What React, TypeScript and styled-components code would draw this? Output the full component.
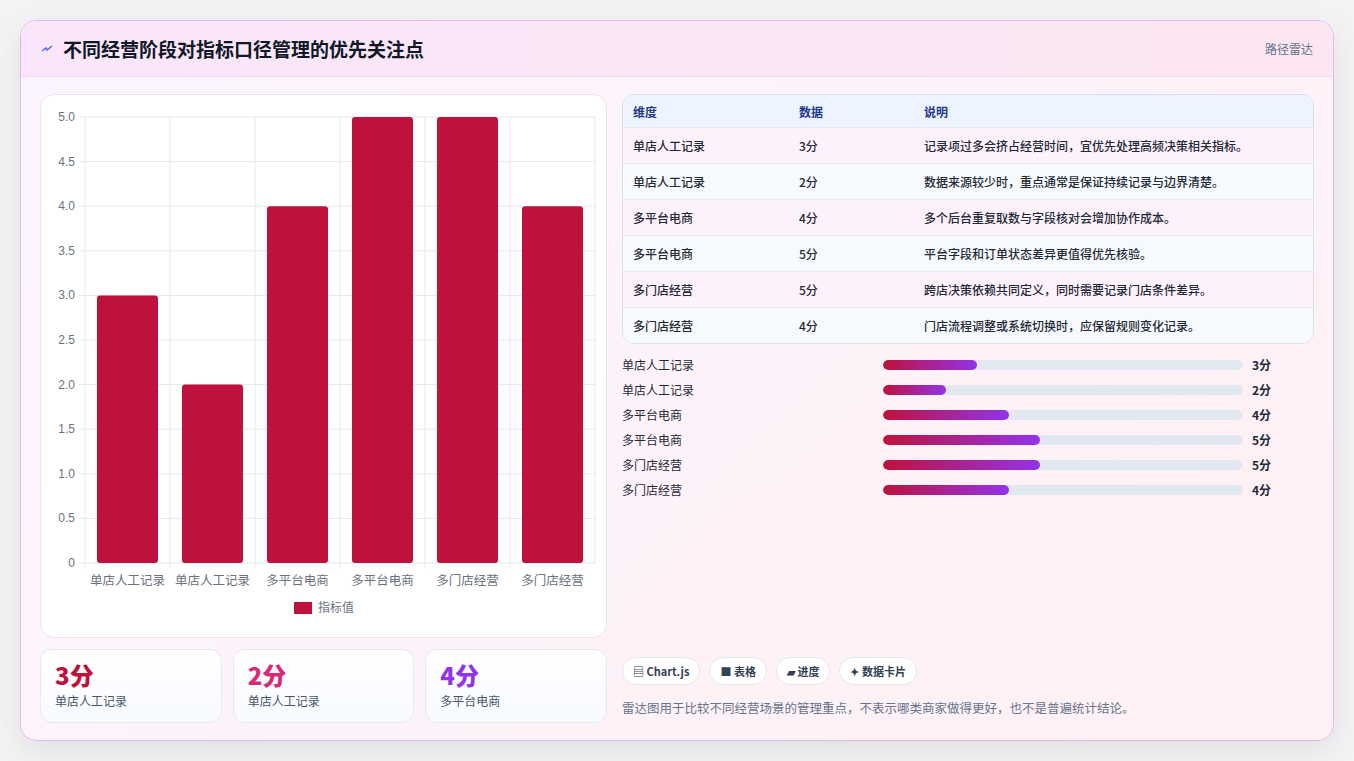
import styled, { createGlobalStyle } from "styled-components";

const ROWS = [
  { name: "单店人工记录", value: 3, note: "记录项过多会挤占经营时间，宜优先处理高频决策相关指标。" },
  { name: "单店人工记录", value: 2, note: "数据来源较少时，重点通常是保证持续记录与边界清楚。" },
  { name: "多平台电商", value: 4, note: "多个后台重复取数与字段核对会增加协作成本。" },
  { name: "多平台电商", value: 5, note: "平台字段和订单状态差异更值得优先核验。" },
  { name: "多门店经营", value: 5, note: "跨店决策依赖共同定义，同时需要记录门店条件差异。" },
  { name: "多门店经营", value: 4, note: "门店流程调整或系统切换时，应保留规则变化记录。" },
];

const STATS = [
  { value: 3, name: "单店人工记录", color: "#be123c" },
  { value: 2, name: "单店人工记录", color: "#db2777" },
  { value: 4, name: "多平台电商", color: "#9333ea" },
];

const CHIPS = ["▤ Chart.js", "■ 表格", "▰ 进度", "✦ 数据卡片"];

const GlobalStyle = createGlobalStyle`
  body {
    margin: 0;
    background: #f3f3f5;
    font-family: "Noto Sans CJK SC", "Noto Sans", sans-serif;
  }
`;

const Page = styled.div`
  padding: 20px 20px 20px 20px;
  height: 761px;
  box-sizing: border-box;
`;

const Card = styled.div`
  height: 721px;
  box-sizing: border-box;
  border: 1px solid #e4b8ee;
  border-radius: 16px;
  background: linear-gradient(135deg, #fcf5ff 0%, #fff0f4 100%);
  box-shadow: 0 10px 30px rgba(0, 0, 0, 0.08);
  overflow: hidden;
  display: flex;
  flex-direction: column;
`;

const Header = styled.div`
  height: 55px;
  flex: none;
  display: flex;
  align-items: center;
  justify-content: space-between;
  padding: 0 20px;
  background: linear-gradient(90deg, #f9e6fb, #fce6f2);
  border-bottom: 1px solid #efdaf0;
`;

const Title = styled.h1`
  margin: 0;
  font-size: 19px;
  font-weight: 700;
  color: #111827;
  display: flex;
  align-items: center;
  gap: 10px;
`;

const HeaderTag = styled.span`
  font-size: 12px;
  color: #64748b;
`;

const Body = styled.div`
  flex: 1;
  display: grid;
  grid-template-columns: 567px 1fr;
  gap: 15px;
  padding: 17px 19px 19px 19px;
`;

const Left = styled.div`
  display: flex;
  flex-direction: column;
  gap: 11px;
`;

const ChartCard = styled.div`
  height: 544px;
  box-sizing: border-box;
  background: #fff;
  border: 1px solid #ebe4ee;
  border-radius: 14px;
`;

const Stats = styled.div`
  display: grid;
  grid-template-columns: repeat(3, 1fr);
  gap: 11px;
`;

const Stat = styled.div`
  height: 74px;
  box-sizing: border-box;
  padding: 10px 14px;
  background: linear-gradient(180deg, #fff, #f7faff);
  border: 1px solid #e3e8f3;
  border-radius: 12px;
`;

const StatValue = styled.div<{ color: string }>`
  font-size: 24px;
  font-weight: 800;
  line-height: 30px;
  color: ${({ color }) => color};
`;

const StatName = styled.div`
  font-size: 12px;
  color: #475569;
  margin-top: 2px;
`;

const Right = styled.div`
  display: flex;
  flex-direction: column;
`;

const Table = styled.div`
  border: 1px solid #d9e0ee;
  border-radius: 12px;
  overflow: hidden;
  font-size: 12px;
`;

const Row = styled.div<{ head?: boolean; alt?: boolean }>`
  display: grid;
  grid-template-columns: 166px 125px 1fr;
  align-items: center;
  height: ${({ head }) => (head ? "32px" : "35px")};
  padding: 0 10px;
  border-top: ${({ head }) => (head ? "none" : "1px solid #e7eaf2")};
  background: ${({ head, alt }) => (head ? "#edf4ff" : alt ? "#f7fafc" : "#fdf2fb")};
  color: ${({ head }) => (head ? "#1e3a8a" : "#1f2937")};
  font-weight: ${({ head }) => (head ? 700 : 500)};
`;

const Bars = styled.div`
  display: flex;
  flex-direction: column;
  gap: 9px;
  margin-top: 12px;
`;

const BarRow = styled.div`
  display: grid;
  grid-template-columns: 261px 360px 1fr;
  align-items: center;
  gap: 0;
  height: 16px;
  font-size: 12px;
  color: #1f2937;
`;

const Track = styled.div`
  height: 10px;
  border-radius: 5px;
  background: #e2e8f0;
  overflow: hidden;
`;

const Fill = styled.div`
  height: 100%;
  border-radius: 5px;
  background: linear-gradient(90deg, #be123c, #9333ea);
`;

const BarValue = styled.span`
  padding-left: 9px;
  font-weight: 700;
`;

const Spacer = styled.div`
  flex: 1;
`;

const Chips = styled.div`
  display: flex;
  gap: 9px;
`;

const Chip = styled.span`
  height: 28px;
  box-sizing: border-box;
  padding: 0 10px;
  display: flex;
  align-items: center;
  border: 1px solid #e5e7eb;
  border-radius: 14px;
  background: #fff;
  font-size: 11px;
  font-weight: 700;
  color: #334155;
`;

const Footnote = styled.p`
  margin: 13px 0 6px;
  font-size: 12.5px;
  color: #64748b;
`;

function BarChart() {
  const x0 = 44;
  const y0 = 22;
  const h = 446;
  const w = 510;
  const cw = w / 6;
  const ticks = [0, 0.5, 1, 1.5, 2, 2.5, 3, 3.5, 4, 4.5, 5];
  return (
    <svg width="565" height="542" fontFamily="Liberation Sans, Noto Sans CJK SC, sans-serif">
      {ticks.map((t) => {
        const y = y0 + h - (t / 5) * h;
        return (
          <g key={t}>
            <line x1={x0 - 6} x2={x0 + w} y1={y} y2={y} stroke="#e5e7eb" />
            <text x={x0 - 10} y={y + 4} fontSize="12" fill="#6b7280" textAnchor="end">
              {t === 0 ? "0" : t.toFixed(1)}
            </text>
          </g>
        );
      })}
      {ROWS.map((r, i) => {
        const bh = (r.value / 5) * h;
        const cx = x0 + cw * i + cw / 2;
        return (
          <g key={i}>
            <line x1={x0 + cw * i} x2={x0 + cw * i} y1={y0} y2={y0 + h + 6} stroke="#e5e7eb" />
            <rect x={cx - 30.5} y={y0 + h - bh} width="61" height={bh} rx="3" fill="#be123c" />
            <text x={cx} y={y0 + h + 22} fontSize="12.5" fill="#6b7280" textAnchor="middle" fontFamily="Noto Sans CJK SC, sans-serif">
              {r.name}
            </text>
          </g>
        );
      })}
      <line x1={x0 + w} x2={x0 + w} y1={y0} y2={y0 + h} stroke="#e5e7eb" />
      <rect x="253" y="507" width="18" height="12" fill="#be123c" />
      <text x="277" y="517" fontSize="12" fill="#6b7280" fontFamily="Noto Sans CJK SC, sans-serif">指标值</text>
    </svg>
  );
}

export default function App() {
  return (
    <Page>
      <GlobalStyle />
      <Card>
        <Header>
          <Title>
            <svg width="12" height="10" viewBox="0 0 12 10">
              <path d="M1 7 L5 4 L6 6 L11 2" stroke="#4f6bed" strokeWidth="1.5" fill="none" />
            </svg>
            不同经营阶段对指标口径管理的优先关注点
          </Title>
          <HeaderTag>路径雷达</HeaderTag>
        </Header>
        <Body>
          <Left>
            <ChartCard>
              <BarChart />
            </ChartCard>
            <Stats>
              {STATS.map((s, i) => (
                <Stat key={i}>
                  <StatValue color={s.color}>{s.value}分</StatValue>
                  <StatName>{s.name}</StatName>
                </Stat>
              ))}
            </Stats>
          </Left>
          <Right>
            <Table>
              <Row head>
                <span>维度</span>
                <span>数据</span>
                <span>说明</span>
              </Row>
              {ROWS.map((r, i) => (
                <Row key={i} alt={i % 2 === 1}>
                  <span>{r.name}</span>
                  <span>{r.value}分</span>
                  <span>{r.note}</span>
                </Row>
              ))}
            </Table>
            <Bars>
              {ROWS.map((r, i) => (
                <BarRow key={i}>
                  <span>{r.name}</span>
                  <Track>
                    <Fill style={{ width: `${(r.value / 11.47) * 100}%` }} />
                  </Track>
                  <BarValue>{r.value}分</BarValue>
                </BarRow>
              ))}
            </Bars>
            <Spacer />
            <Chips>
              {CHIPS.map((c) => (
                <Chip key={c}>{c}</Chip>
              ))}
            </Chips>
            <Footnote>雷达图用于比较不同经营场景的管理重点，不表示哪类商家做得更好，也不是普遍统计结论。</Footnote>
          </Right>
        </Body>
      </Card>
    </Page>
  );
}
